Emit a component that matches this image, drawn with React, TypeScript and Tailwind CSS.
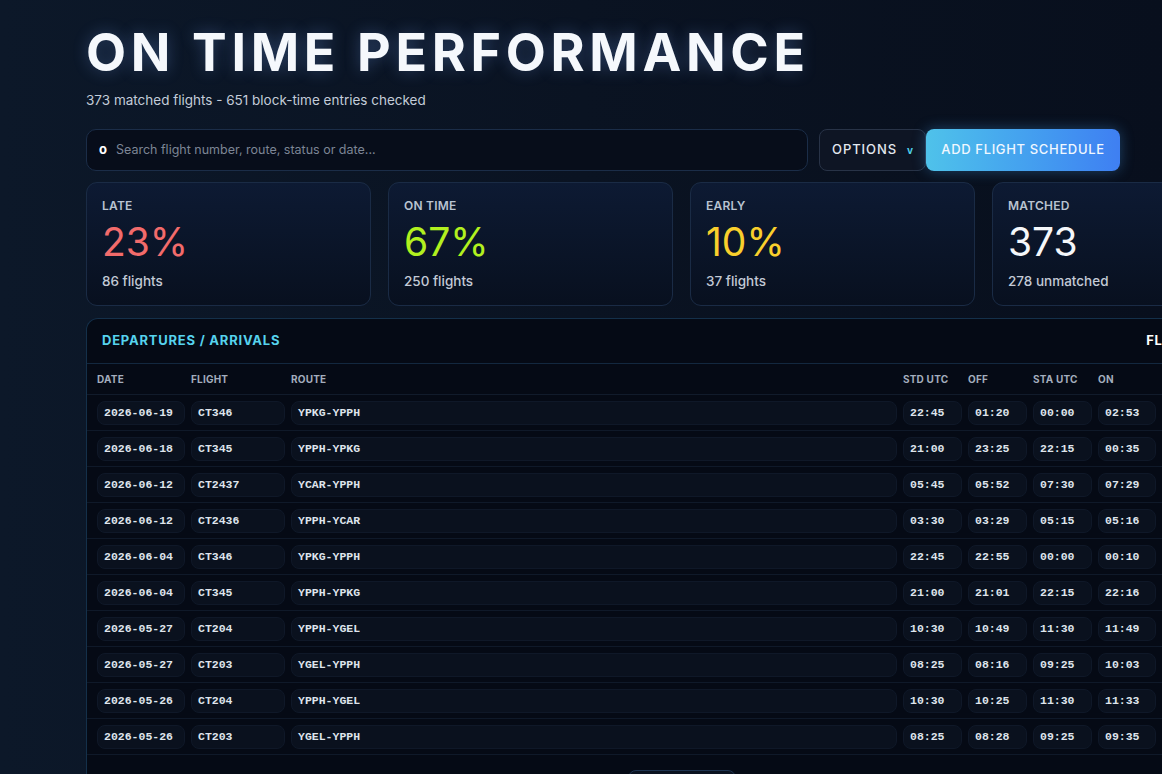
import React from "react";

const rows = [
  ["2026-06-19", "CT346", "YPKG-YPPH", "22:45", "01:20", "00:00", "02:53", "late"],
  ["2026-06-18", "CT345", "YPPH-YPKG", "21:00", "23:25", "22:15", "00:35", "late"],
  ["2026-06-12", "CT2437", "YCAR-YPPH", "05:45", "05:52", "07:30", "07:29", "ok"],
  ["2026-06-12", "CT2436", "YPPH-YCAR", "03:30", "03:29", "05:15", "05:16", "ok"],
  ["2026-06-04", "CT346", "YPKG-YPPH", "22:45", "22:55", "00:00", "00:10", "ok"],
  ["2026-06-04", "CT345", "YPPH-YPKG", "21:00", "21:01", "22:15", "22:16", "ok"],
  ["2026-05-27", "CT204", "YPPH-YGEL", "10:30", "10:49", "11:30", "11:49", "late"],
  ["2026-05-27", "CT203", "YGEL-YPPH", "08:25", "08:16", "09:25", "10:03", "late"],
  ["2026-05-26", "CT204", "YPPH-YGEL", "10:30", "10:25", "11:30", "11:33", "ok"],
  ["2026-05-26", "CT203", "YGEL-YPPH", "08:25", "08:28", "09:25", "09:35", "ok"],
];

function Card({ label, value, sub, color }: { label: string; value: string; sub: string; color: string }) {
  return (
    <div className="w-[285px] h-[124px] shrink-0 rounded-[11px] border border-[#1a2b45] bg-gradient-to-b from-[#0d1a33] to-[#08101f] px-[15px] pt-[16px]">
      <div className="text-[12px] font-semibold text-[#b9c3d1] tracking-[0.02em] leading-[14px]">{label}</div>
      <div className={`text-[39px] leading-[46px] mt-[6px] font-normal ${color}`}>{value}</div>
      <div className="text-[13.5px] font-medium text-[#c3cad6] mt-[7px] leading-[18px]">{sub}</div>
    </div>
  );
}

function Pill({ children, w }: { children: React.ReactNode; w: string }) {
  return (
    <div className={`${w} shrink-0 h-[24px] rounded-[8px] bg-[#0a111e] border border-[#0f1828] flex items-center px-[6px] text-[11.5px] font-bold text-[#dfe4ec] whitespace-nowrap`}>
      {children}
    </div>
  );
}

export default function App() {
  return (
    <div
      className="w-[1162px] h-[774px] overflow-hidden bg-gradient-to-r from-[#0c1829] via-[#0a1322] to-[#080f1d] text-white"
      style={{ fontFamily: "Inter, 'Noto Sans', sans-serif" }}
    >
      <div className="pl-[86px] pt-[23px]">
        <h1
          className="text-[52px] font-bold tracking-[0.09em] leading-[60px] text-[#f5f8fc]"
          style={{ textShadow: "0 0 16px rgba(120,170,255,0.3)" }}
        >
          ON TIME PERFORMANCE
        </h1>
        <div className="text-[13.5px] text-[#c3ccd9] mt-[9px] leading-[16px]">
          373 matched flights - 651 block-time entries checked
        </div>

        <div className="flex items-center mt-[21px]">
          <div className="w-[722px] h-[42px] rounded-[10px] border border-[#1b2d48] bg-[#070d1a] flex items-center pl-[12px]">
            <span className="text-[13px] font-bold text-white mr-[9px]">o</span>
            <span className="text-[12.5px] text-[#7c8595]">Search flight number, route, status or date...</span>
          </div>
          <div className="ml-[11px] w-[107px] h-[42px] rounded-[8px] border border-[#283347] bg-[#0e1524] flex items-center justify-center gap-[10px]">
            <span className="text-[13px] font-medium tracking-[0.07em] text-[#e3e8ef]">OPTIONS</span>
            <span className="text-[10px] font-bold text-[#4fd1ea]">v</span>
          </div>
          <div
            className="w-[194px] h-[42px] rounded-[8px] bg-gradient-to-r from-[#4fc2ea] to-[#3f7ff2] flex items-center justify-center"
            style={{ boxShadow: "0 0 14px rgba(70,160,240,0.35)" }}
          >
            <span className="text-[13px] font-medium tracking-[0.05em] text-[#f0f7ff]">ADD FLIGHT SCHEDULE</span>
          </div>
        </div>

        <div className="flex gap-[17px] mt-[11px]">
          <Card label="LATE" value="23%" sub="86 flights" color="text-[#f26b6b]" />
          <Card label="ON TIME" value="67%" sub="250 flights" color="text-[#b2f01f]" />
          <Card label="EARLY" value="10%" sub="37 flights" color="text-[#f9cf2c]" />
          <Card label="MATCHED" value="373" sub="278 unmatched" color="text-[#f5f7fa]" />
        </div>

        <div className="w-[1191px] mt-[12px] rounded-t-[12px] border border-b-0 border-[#14304a] bg-[#050a15]">
          <div className="h-[45px] flex items-center px-[15px] border-b border-[#13283f]">
            <span className="text-[13px] font-bold tracking-[0.06em] text-[#56d3ee]">DEPARTURES / ARRIVALS</span>
            <span className="ml-[866px] text-[13px] font-bold tracking-[0.04em] text-white whitespace-nowrap">FLIGHT LOG</span>
          </div>
          <div className="h-[31px] flex items-center gap-[6px] pl-[10px] border-b border-[#111b2b] text-[10px] font-bold text-[#a3adbd] tracking-[0.02em]">
            <div className="w-[88px] shrink-0">DATE</div>
            <div className="w-[94px] shrink-0">FLIGHT</div>
            <div className="w-[606px] shrink-0">ROUTE</div>
            <div className="w-[59px] shrink-0">STD UTC</div>
            <div className="w-[59px] shrink-0">OFF</div>
            <div className="w-[59px] shrink-0">STA UTC</div>
            <div className="w-[58px] shrink-0">ON</div>
            <div className="w-[80px] shrink-0">DELAY</div>
          </div>
          <div style={{ fontFamily: "'Liberation Mono', 'Courier New', monospace" }}>
            {rows.map((r, i) => (
              <div key={i} className="h-[36px] flex items-center gap-[6px] pl-[10px] border-b border-[#0f1929]">
                <Pill w="w-[88px]">{r[0]}</Pill>
                <Pill w="w-[94px]">{r[1]}</Pill>
                <Pill w="w-[606px]">{r[2]}</Pill>
                <Pill w="w-[59px]">{r[3]}</Pill>
                <Pill w="w-[59px]">{r[4]}</Pill>
                <Pill w="w-[59px]">{r[5]}</Pill>
                <Pill w="w-[58px]">{r[6]}</Pill>
                <div
                  className={`w-[80px] shrink-0 h-[24px] rounded-[8px] border ${
                    r[7] === "late" ? "bg-[#3a1016] border-[#5a1a22]" : "bg-[#0f2a1c] border-[#17402a]"
                  }`}
                />
              </div>
            ))}
          </div>
          <div className="flex justify-center pt-[15px]">
            <div className="w-[108px] h-[30px] rounded-[8px] border border-[#1d3350] bg-[#0a1220]" />
          </div>
        </div>
      </div>
    </div>
  );
}
